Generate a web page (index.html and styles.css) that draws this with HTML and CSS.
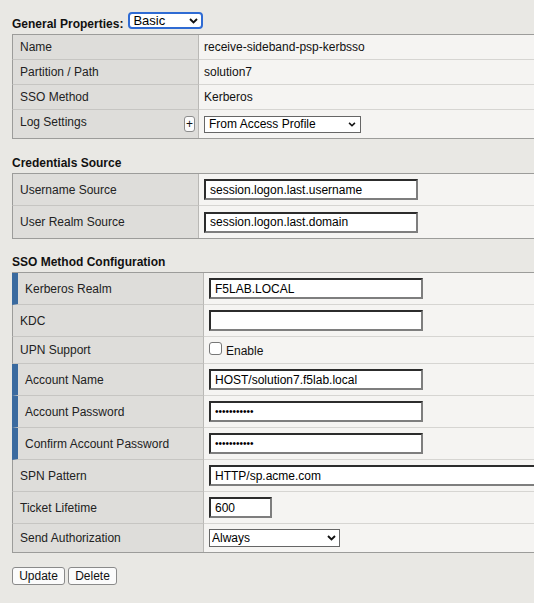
FILE: index.html
```html
<!DOCTYPE html>
<html>
<head>
<meta charset="utf-8">
<link rel="stylesheet" href="styles.css">
</head>
<body>
<div class="page">
  <div class="gp-head">
    <span class="gp-title">General Properties:</span>
    <span class="sel sel-basic">
      <select><option>Basic</option></select>
      <svg viewBox="0 0 9 6"><path d="M1 1 L4.5 4.5 L8 1" fill="none" stroke="#111" stroke-width="1.9"/></svg>
    </span>
  </div>

  <div class="ptable t1">
    <div class="lab">Name</div><div class="val">receive-sideband-psp-kerbsso</div>
    <div class="lab">Partition / Path</div><div class="val">solution7</div>
    <div class="lab">SSO Method</div><div class="val">Kerberos</div>
    <div class="lab"><span class="log-text">Log Settings</span><button class="plus">+</button></div>
    <div class="val">
      <span class="sel sel-log">
        <select><option>From Access Profile</option></select>
        <svg viewBox="0 0 9 6"><path d="M1 1 L4.5 4.5 L8 1" fill="none" stroke="#111" stroke-width="1.9"/></svg>
      </span>
    </div>
  </div>

  <div class="sec-head first">Credentials Source</div>
  <div class="ptable t2">
    <div class="lab">Username Source</div><div class="val"><input class="txt" type="text" value="session.logon.last.username"></div>
    <div class="lab">User Realm Source</div><div class="val"><input class="txt" type="text" value="session.logon.last.domain"></div>
  </div>

  <div class="sec-head second">SSO Method Configuration</div>
  <div class="ptable t3">
    <div class="lab req">Kerberos Realm</div><div class="val"><input class="txt" type="text" value="F5LAB.LOCAL"></div>
    <div class="lab">KDC</div><div class="val"><input class="txt" type="text" value=""></div>
    <div class="lab">UPN Support</div><div class="val"><label class="chk-wrap"><input class="chk" type="checkbox"><span>Enable</span></label></div>
    <div class="lab req">Account Name</div><div class="val"><input class="txt" type="text" value="HOST/solution7.f5lab.local"></div>
    <div class="lab req">Account Password</div><div class="val"><input class="txt pw" type="password" value="abcdefghijk"></div>
    <div class="lab req">Confirm Account Password</div><div class="val"><input class="txt pw" type="password" value="abcdefghijk"></div>
    <div class="lab">SPN Pattern</div><div class="val"><input class="txt spn" type="text" value="HTTP/sp.acme.com"></div>
    <div class="lab">Ticket Lifetime</div><div class="val"><input class="txt ticket" type="text" value="600"></div>
    <div class="lab">Send Authorization</div>
    <div class="val">
      <span class="sel sel-always">
        <select><option>Always</option></select>
        <svg viewBox="0 0 9 6"><path d="M1 1 L4.5 4.5 L8 1" fill="none" stroke="#111" stroke-width="1.9"/></svg>
      </span>
    </div>
  </div>

  <div class="actions">
    <button class="btn btn-update">Update</button>
    <button class="btn btn-delete">Delete</button>
  </div>
</div>
</body>
</html>
```

FILE: styles.css
```css
html, body {
  margin: 0;
  padding: 0;
  overflow: hidden;
}
body {
  background: #e9e8e4;
  font-family: "Liberation Sans", Arial, sans-serif;
  font-size: 12px;
  color: #1a1a1a;
}
.page {
  padding-left: 12px;
}

/* header row */
.gp-head {
  height: 34px;
  display: flex;
  align-items: flex-start;
}
.gp-title {
  font-weight: bold;
  line-height: 14px;
  margin-top: 17px;
  color: #111;
}
.sec-head {
  font-weight: bold;
  line-height: 14px;
  margin-bottom: 3px;
  color: #111;
}
.sec-head.first { padding-top: 17px; }
.sec-head.second { padding-top: 16px; }

/* selects */
.sel {
  position: relative;
  display: inline-flex;
}
.sel select {
  -webkit-appearance: none;
  appearance: none;
  box-sizing: border-box;
  font-family: "Liberation Sans", Arial, sans-serif;
  font-size: 12px;
  color: #000;
  background: #fff;
  margin: 0;
  border-radius: 0;
  outline: none;
}
.sel svg {
  position: absolute;
  pointer-events: none;
  width: 9px;
  height: 6px;
}
.sel-basic { margin: 12px 0 0 5px; }
.sel-basic select {
  width: 75px;
  height: 17px;
  border: 2px solid #2f6bd3;
  border-radius: 4px;
  padding: 0 0 0 3px;
  font-size: 13px;
  line-height: 13px;
}
.sel-basic svg { right: 5px; top: 6px; }

.sel-log select {
  width: 157px;
  height: 17px;
  border: 1px solid #666;
  padding: 0 0 0 4px;
  line-height: 15px;
}
.sel-log svg { right: 5px; top: 6px; width: 8px; height: 5px; }

.sel-always select {
  width: 131px;
  height: 18px;
  border: 1px solid #666;
  padding: 0 0 0 2px;
  line-height: 16px;
}
.sel-always svg { right: 4px; top: 6px; }

/* property tables */
.ptable {
  display: grid;
  width: 640px;
  border-top: 1px solid #9c9c9a;
  border-bottom: 1px solid #9c9c9a;
}
.t1 {
  grid-template-columns: 187px 1fr;
  grid-template-rows: 25px 25px 25px 28px;
}
.t2 {
  grid-template-columns: 187px 1fr;
  grid-template-rows: 32px 32px;
}
.t3 {
  grid-template-columns: 192px 1fr;
  grid-template-rows: 32px 32px 27px 32px 32px 32px 32px 32px 28px;
}
.lab, .val {
  box-sizing: border-box;
  display: flex;
  align-items: center;
  line-height: 14px;
  border-bottom: 1px solid #d6d5d2;
}
.lab {
  background: #dedddA;
  border-left: 1px solid #9c9c9a;
  border-right: 1px solid #b9b8b5;
  border-bottom-color: #c6c5c2;
  padding-left: 7px;
  color: #222;
}
.lab.req {
  border-left: 6px solid #3a6a9f;
}
.val {
  background: #f5f4f2;
  padding-left: 5px;
  color: #111;
}
.ptable > :nth-last-child(-n+2) {
  border-bottom: none;
}

.log-text { margin-bottom: 5px; }
.plus {
  margin-left: auto;
  margin-right: 3px;
  width: 11px;
  height: 16px;
  box-sizing: border-box;
  padding: 0;
  border: 1px solid #8c8c8c;
  border-radius: 3px;
  background: #fbfbfb;
  font-family: "Liberation Sans", Arial, sans-serif;
  font-size: 12px;
  line-height: 14px;
  color: #111;
}

/* inputs */
.txt {
  box-sizing: border-box;
  width: 214px;
  height: 21px;
  margin: 0;
  padding: 0 0 0 4px;
  border-style: solid;
  border-width: 2px;
  border-color: #2c2c2c #7e7e7e #7e7e7e #2c2c2c;
  background: #fff;
  font-family: "Liberation Sans", Arial, sans-serif;
  font-size: 12px;
  color: #000;
  outline: none;
}
.txt.pw {
  font-size: 10px;
}
.txt.spn { width: 420px; }
.txt.ticket { width: 63px; }

.chk-wrap {
  display: inline-flex;
  align-items: baseline;
}
.chk {
  -webkit-appearance: none;
  appearance: none;
  box-sizing: border-box;
  width: 13px;
  height: 13px;
  margin: 0 4px 0 0;
  border: 1px solid #777;
  border-radius: 3px;
  background: #fff;
}

/* buttons */
.actions {
  display: flex;
  gap: 3px;
  margin-top: 14px;
}
.btn {
  box-sizing: border-box;
  height: 18px;
  padding: 0;
  border: 1px solid #8a8a8a;
  border-radius: 3px;
  background: #fbfbfb;
  font-family: "Liberation Sans", Arial, sans-serif;
  font-size: 12px;
  color: #111;
}
.btn-update { width: 53px; }
.btn-delete { width: 49px; }
```
